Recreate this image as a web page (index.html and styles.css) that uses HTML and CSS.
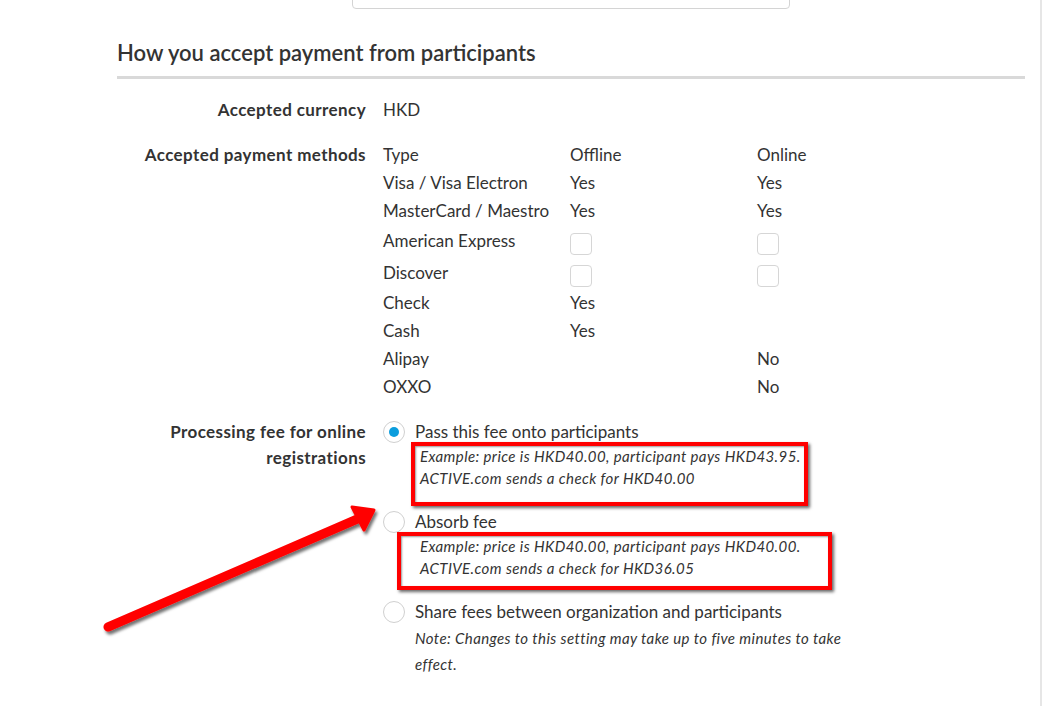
FILE: index.html
```html
<!DOCTYPE html>
<html lang="en">
<head>
<meta charset="utf-8">
<title>Payment settings</title>
<link rel="stylesheet" href="styles.css">
</head>
<body>
<div class="page">
  <div class="content">
    <div class="top-input"></div>
    <h2 class="section-title">How you accept payment from participants</h2>

    <div class="form-row">
      <div class="label">Accepted currency</div>
      <div class="value">HKD</div>
    </div>

    <div class="form-row">
      <div class="label">Accepted payment methods</div>
      <div class="value">
        <div class="pm-table">
          <div class="pm-row"><span>Type</span><span>Offline</span><span>Online</span></div>
          <div class="pm-row"><span>Visa / Visa Electron</span><span>Yes</span><span>Yes</span></div>
          <div class="pm-row"><span>MasterCard / Maestro</span><span>Yes</span><span>Yes</span></div>
          <div class="pm-row pm-check"><span>American Express</span><span><i class="checkbox"></i></span><span><i class="checkbox"></i></span></div>
          <div class="pm-row pm-check"><span>Discover</span><span><i class="checkbox"></i></span><span><i class="checkbox"></i></span></div>
          <div class="pm-row"><span>Check</span><span>Yes</span><span></span></div>
          <div class="pm-row"><span>Cash</span><span>Yes</span><span></span></div>
          <div class="pm-row"><span>Alipay</span><span></span><span>No</span></div>
          <div class="pm-row"><span>OXXO</span><span></span><span>No</span></div>
        </div>
      </div>
    </div>

    <div class="form-row fee-row">
      <div class="label label-wrap">Processing fee for online<br>registrations</div>
      <div class="value">
        <div class="option">
          <span class="radio checked"></span>
          <span class="option-text">Pass this fee onto participants</span>
        </div>
        <div class="example">Example: price is HKD40.00, participant pays HKD43.95.<br>ACTIVE.com sends a check for HKD40.00</div>
        <div class="option">
          <span class="radio"></span>
          <span class="option-text">Absorb fee</span>
        </div>
        <div class="example">Example: price is HKD40.00, participant pays HKD40.00.<br>ACTIVE.com sends a check for HKD36.05</div>
        <div class="option">
          <span class="radio"></span>
          <span class="option-text">Share fees between organization and participants</span>
        </div>
        <div class="note">Note: Changes to this setting may take up to five minutes to take effect.</div>
      </div>
    </div>
  </div>

  <div class="annot-box annot-box-1"></div>
  <div class="annot-box annot-box-2"></div>
  <svg class="annot-arrow" width="1042" height="706" viewBox="0 0 1042 706">
    <defs>
      <filter id="sh" x="-10%" y="-10%" width="130%" height="130%">
        <feDropShadow dx="2" dy="3" stdDeviation="1.6" flood-color="#000" flood-opacity="0.55"/>
      </filter>
    </defs>
    <g filter="url(#sh)" fill="#ff0000" stroke="#ff0000">
      <line x1="108" y1="627" x2="362" y2="517" stroke-width="9" stroke-linecap="round"/>
      <polygon points="374,510 352,507 364,530" stroke-width="3" stroke-linejoin="round"/>
    </g>
  </svg>
</div>
</body>
</html>
```
FILE: styles.css
```css
* { box-sizing: border-box; }
html, body { margin: 0; padding: 0; background: #fff; }
body {
  font-family: "Lato", "Liberation Sans", sans-serif;
  color: #333;
  font-size: 17px;
}
.page {
  position: relative;
  width: 1042px;
  min-height: 706px;
  overflow: hidden;
  border-right: 2px solid #e6e6e6;
}
.content {
  width: 1025px;
  padding-left: 117px;
}
.top-input {
  margin-left: 235px;
  width: 438px;
  height: 40px;
  margin-top: -31px;
  border: 1px solid #d4d4d4;
  border-radius: 4px;
}
.section-title {
  margin: 29px 0 0;
  font-size: 22px;
  font-weight: 600;
  line-height: 30px;
  color: #333;
  padding-bottom: 8px;
  border-bottom: 3px solid #d9d9d9;
}
.form-row {
  display: grid;
  grid-template-columns: 249px 1fr;
  column-gap: 17px;
  margin-top: 17px;
  line-height: 28px;
}
.label {
  text-align: right;
  font-weight: 700;
  letter-spacing: 0.4px;
  color: #333;
}
.pm-row {
  display: grid;
  grid-template-columns: 187px 187px 187px;
  height: 28px;
}
.pm-row.pm-check {
  height: 32px;
  padding-top: 2px;
}
.pm-check span:nth-child(n+2) { padding-top: 6px; }
.checkbox {
  display: block;
  width: 22px;
  height: 22px;
  border: 1px solid #d6d6d6;
  border-radius: 4px;
}
.fee-row { margin-top: 18px; }
.label-wrap { line-height: 26px; }
.option {
  display: flex;
  align-items: center;
  height: 26px;
}
.radio {
  width: 22px;
  height: 22px;
  border: 1px solid #d0d0d0;
  border-radius: 50%;
  margin-right: 10px;
  display: flex;
  align-items: center;
  justify-content: center;
  flex: none;
}
.radio.checked::after {
  content: "";
  width: 10px;
  height: 10px;
  border-radius: 50%;
  background: #0b9ddd;
}
.example {
  font-style: italic;
  font-size: 15px;
  letter-spacing: 0.4px;
  line-height: 22px;
  padding-left: 37px;
  margin-bottom: 20px;
  color: #333;
}
.note {
  font-style: italic;
  font-size: 15px;
  letter-spacing: 0.4px;
  line-height: 26px;
  padding-left: 32px;
  width: 475px;
  color: #333;
}
.annot-box {
  position: absolute;
  border: 4px solid #ff0000;
  box-shadow: 2px 2px 3px rgba(0,0,0,0.6), inset 1px 1px 2px rgba(0,0,0,0.4);
}
.annot-box-1 { left: 411px; top: 442px; width: 397px; height: 64px; }
.annot-box-2 { left: 397px; top: 532px; width: 435px; height: 58px; }
.annot-arrow {
  position: absolute;
  left: 0;
  top: 0;
  pointer-events: none;
}
```
